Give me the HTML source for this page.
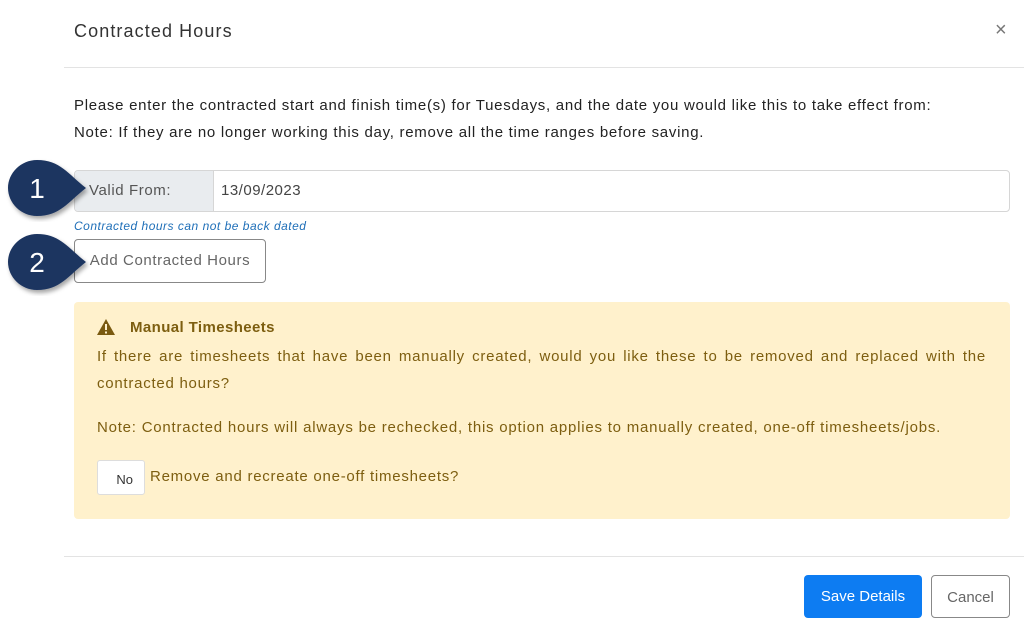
<!DOCTYPE html>
<html><head><style>
body{margin:0;width:1024px;height:631px;background:#fff;font-family:"Liberation Sans",sans-serif;position:relative;overflow:hidden;color:#333}
.a{position:absolute}
</style></head><body>
<div class="a" style="left:74px;top:21px;font-size:18px;letter-spacing:1.1px;color:#333">Contracted Hours</div>
<div class="a" style="left:995px;top:19px;font-size:20px;color:#777">×</div>
<div class="a" style="left:64px;top:67px;width:960px;height:1px;background:#e3e3e3"></div>
<div class="a" style="left:74px;top:92px;font-size:15px;letter-spacing:0.72px;line-height:27px;color:#222;white-space:nowrap">Please enter the contracted start and finish time(s) for Tuesdays, and the date you would like this to take effect from:<br>Note: If they are no longer working this day, remove all the time ranges before saving.</div>
<div class="a" style="left:74px;top:170px;width:934px;height:40px;border:1px solid #d6d6d6;border-radius:4px;overflow:hidden">
 <div style="position:absolute;left:0;top:0;width:138px;height:40px;background:#e9ecef;border-right:1px solid #d6d6d6"></div>
 <div style="position:absolute;left:14px;top:11px;font-size:15px;letter-spacing:0.6px;color:#555">Valid From:</div>
 <div style="position:absolute;left:146px;top:11px;font-size:15px;letter-spacing:0.5px;color:#444">13/09/2023</div>
</div>
<div class="a" style="left:74px;top:219px;font-size:12px;letter-spacing:0.5px;font-style:italic;color:#1f6fb8">Contracted hours can not be back dated</div>
<div class="a" style="left:74px;top:239px;width:190px;height:42px;border:1px solid #888;border-radius:4px;font-size:15px;letter-spacing:0.6px;color:#666;line-height:42px;text-align:center">Add Contracted Hours</div>
<div class="a" style="left:74px;top:302px;width:936px;height:217px;background:#fff1cc;border-radius:4px;color:#7d5e10">
 <svg class="a" style="left:22px;top:16px" width="20" height="18" viewBox="0 0 20 18"><path d="M10 1 L19 17 L1 17 Z" fill="#7a5a10"/><rect x="9" y="6" width="2" height="6" fill="#fff1cc"/><rect x="9" y="13.5" width="2" height="2" fill="#fff1cc"/></svg>
 <div class="a" style="left:56px;top:17px;font-size:15px;letter-spacing:0.4px;font-weight:bold">Manual Timesheets</div>
 <div class="a" style="left:23px;top:41px;width:889px;font-size:15px;letter-spacing:0.75px;line-height:27px;text-align:justify;text-align-last:left">If there are timesheets that have been manually created, would you like these to be removed and replaced with the contracted hours?</div>
 <div class="a" style="left:23px;top:117px;font-size:15px;letter-spacing:0.78px;white-space:nowrap">Note: Contracted hours will always be rechecked, this option applies to manually created, one-off timesheets/jobs.</div>
 <div class="a" style="left:23px;top:158px;width:48px;height:35px;background:#fff;border:1px solid #ddd;border-radius:3px;font-size:13px;color:#333;line-height:38px;text-align:right;box-sizing:border-box;padding-right:11px">No</div>
 <div class="a" style="left:76px;top:166px;font-size:15px;letter-spacing:0.75px">Remove and recreate one-off timesheets?</div>
</div>
<div class="a" style="left:64px;top:556px;width:960px;height:1px;background:#e3e3e3"></div>
<div class="a" style="left:804px;top:575px;width:118px;height:43px;background:#0d7cf2;border-radius:4px;color:#fff;font-size:15px;line-height:44px;text-align:center">Save Details</div>
<div class="a" style="left:931px;top:575px;width:77px;height:41px;border:1px solid #888;border-radius:4px;color:#666;font-size:15px;line-height:43px;text-align:center">Cancel</div>
<svg class="a" style="left:0;top:150px" width="100" height="150" viewBox="0 0 100 150">
 <defs><filter id="s"><feDropShadow dx="2" dy="3" stdDeviation="2" flood-opacity="0.35"/></filter></defs>
 <path d="M37 10 C60 10 68 24 86 38 C68 52 60 66 37 66 C21 66 8 53 8 38 C8 23 21 10 37 10 Z" fill="#1d3461" filter="url(#s)"/>
 <path d="M37 84 C60 84 68 98 86 112 C68 126 60 140 37 140 C21 140 8 127 8 112 C8 97 21 84 37 84 Z" fill="#1d3461" filter="url(#s)"/>
 <text x="37" y="48" fill="#fff" font-size="28" font-family="Liberation Sans" text-anchor="middle">1</text>
 <text x="37" y="122" fill="#fff" font-size="28" font-family="Liberation Sans" text-anchor="middle">2</text>
</svg>
</body></html>
